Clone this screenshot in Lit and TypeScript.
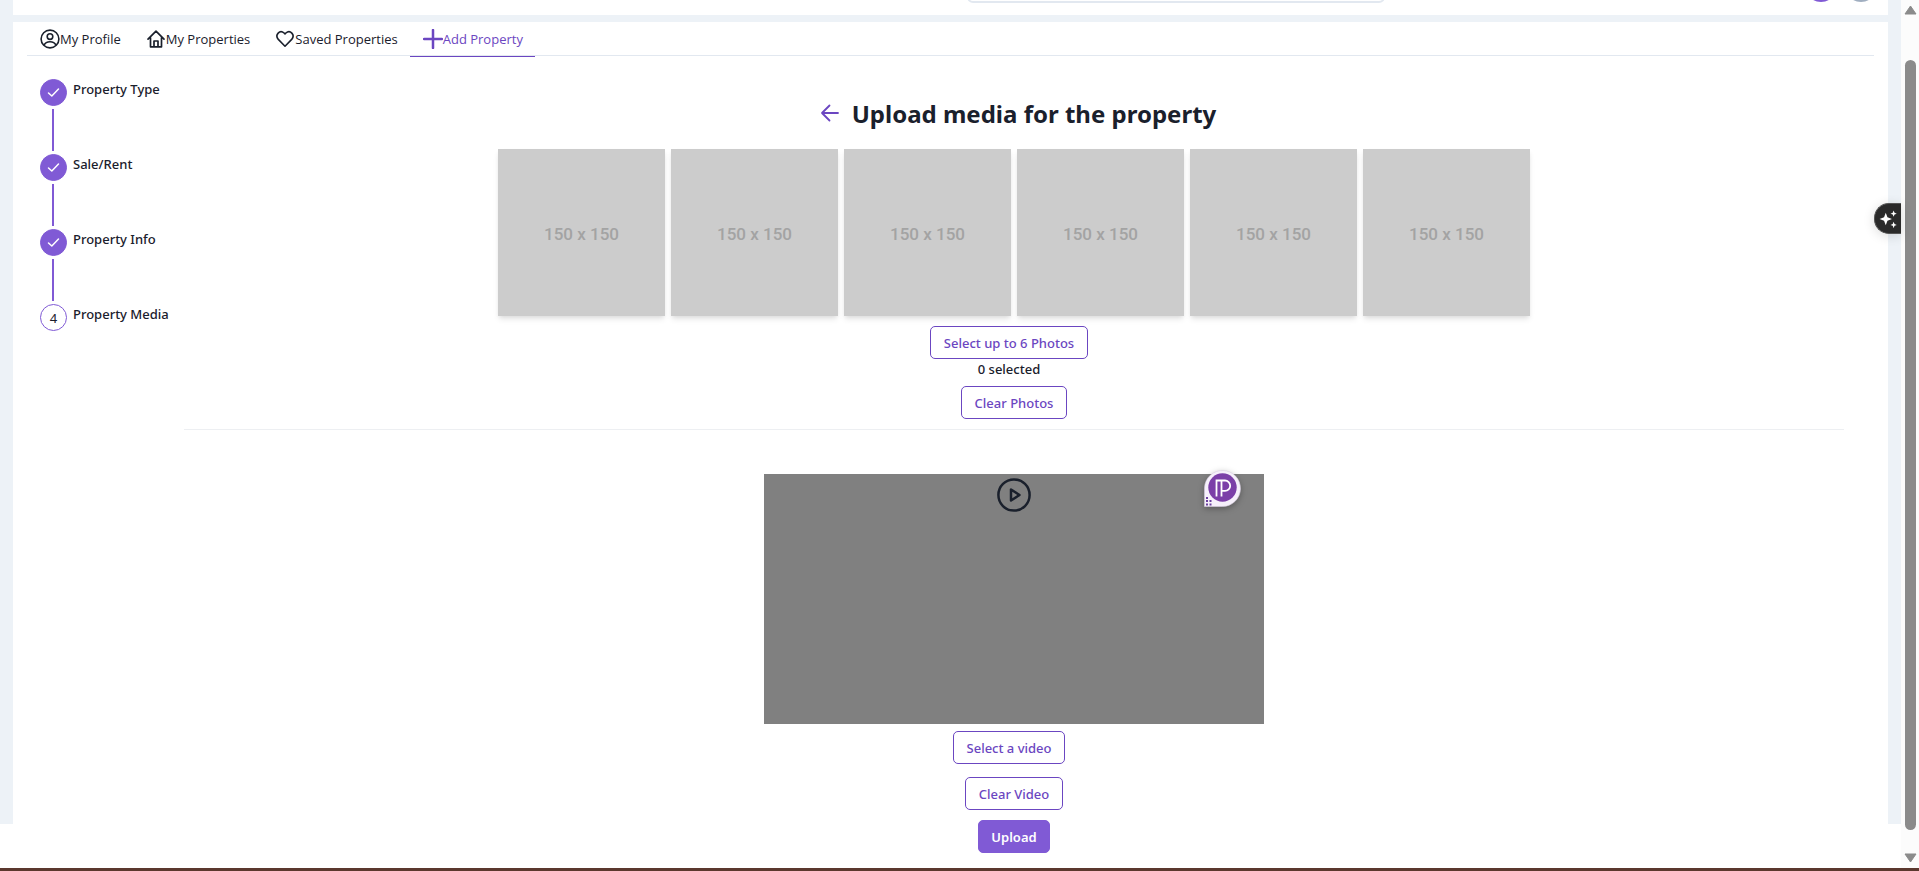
import { LitElement, html, css, svg } from "lit";
import { customElement, property } from "lit/decorators.js";

const icons: Record<string, unknown> = {
  profile: svg`<svg class="icon" viewBox="0 0 20 20" fill="none" stroke="currentColor" stroke-width="1.600"><circle cx="10" cy="10" r="8.900"/><circle cx="10" cy="7.600" r="2.800"/><path d="M4 16.200c1.200-2.600 3.400-3.400 6-3.400s4.800.8 6 3.400"/></svg>`,
  home: svg`<svg class="icon" viewBox="0 0 20 20" fill="none" stroke="currentColor" stroke-width="1.700" stroke-linejoin="round" stroke-linecap="round"><path d="M2 10.200L10 2.200l8 8M4.500 8.500v9.300h11V8.500M8 17.500v-5.500h4v5.500"/></svg>`,
  heart: svg`<svg class="icon" viewBox="0 0 20 20" fill="none" stroke="currentColor" stroke-width="1.600" stroke-linejoin="round"><path d="M10 17.200L3.300 10.400C-.5 6 4.800.2 9.100 4l.9.900.9-.9c4.300-3.800 9.600 2 5.800 6.400z"/></svg>`,
  plus: svg`<svg class="icon" viewBox="0 0 20 20" fill="none" stroke="currentColor" stroke-width="2.500" stroke-linecap="round"><path d="M10 1v18M1 10h18"/></svg>`,
};

@customElement("app-button")
export class AppButton extends LitElement {
  @property({ type: Boolean }) solid = false;

  static styles = css`
    :host { display: block; }
    .button {
      display: block;
      height: 33px;
      padding: 0 13px;
      border: 1px solid #6b46c1;
      border-radius: 5px;
      background: transparent;
      color: #6b46c1;
      font: 500 13px/18px "Noto Sans", "Open Sans", sans-serif;
      cursor: pointer;
    }
    .solid { padding: 0 12px; background: #805ad5; border-color: #805ad5; color: #fff; font-weight: 600; }
  `;

  render() {
    return html`<button type="button" class="button ${this.solid ? "solid" : ""}"><slot></slot></button>`;
  }
}

@customElement("app-root")
export class AppRoot extends LitElement {
  private tabs = [
    { icon: "profile", label: "My Profile" },
    { icon: "home", label: "My Properties" },
    { icon: "heart", label: "Saved Properties" },
    { icon: "plus", label: "Add Property", active: true },
  ];

  private steps = [
    { label: "Property Type", done: true },
    { label: "Sale/Rent", done: true },
    { label: "Property Info", done: true },
    { label: "Property Media", done: false },
  ];

  static styles = css`
    * { box-sizing: border-box; }
    :host {
      box-sizing: border-box;
      display: flex;
      height: 100vh;
      overflow: hidden;
      border-bottom: 3px solid #5b382e;
      background: #fff;
      color: #1a202c;
      font: 13px/20px "Noto Sans", "Open Sans", sans-serif;
    }
    .page { flex: 1; min-width: 0; position: relative; }
    .shell { height: calc(100% - 44px); padding: 0 13px; background: #edf2f7; }
    .topbar {
      display: flex;
      align-items: flex-end;
      justify-content: flex-end;
      height: 15px;
      overflow: hidden;
      padding: 0 11px 12px 0;
      background: #fff;
    }
    .search {
      width: 418px;
      height: 34px;
      margin-right: 420px;
      border: 2px solid #e2e8f0;
      border-radius: 6px;
      background: #fff;
    }
    .avatar { width: 32px; height: 32px; margin-bottom: 1px; border-radius: 50%; background: #a0aec0; }
    .bubble { margin-right: 8px; background: #805ad5; }
    .panel { margin-top: 7px; padding: 0 14px; background: #fff; }
    .tabs { display: flex; height: 34px; border-bottom: 1px solid #e2e8f0; }
    .tab {
      display: flex;
      align-items: center;
      height: 35px;
      padding: 0 12px 0 13px;
      border: 0;
      border-bottom: 1px solid transparent;
      background: none;
      color: inherit;
      font: 400 13px/20px "Open Sans", "Noto Sans", sans-serif;
      cursor: pointer;
    }
    .tab.active { color: #6b46c1; border-color: currentColor; }
    .icon { display: block; width: 20px; height: 20px; flex: none; }
    .body { display: flex; padding: 23px 30px 0 13px; }
    .steps { margin: 0; padding: 0; width: 144px; list-style: none; flex: none; }
    .step { display: grid; grid-template-columns: 27px 1fr; column-gap: 6px; font-weight: 500; }
    .dot {
      display: grid;
      place-items: center;
      width: 27px;
      height: 27px;
      border: 1px solid #805ad5;
      border-radius: 50%;
      font-weight: 400;
    }
    .dot.done { background: #805ad5; color: #fff; }
    .check { display: block; width: 13px; height: 13px; }
    .line { width: 2px; height: 42px; margin: 3px 12px; background: #805ad5; }
    .content { flex: 1; min-width: 0; display: flex; flex-direction: column; align-items: center; }
    .heading { display: flex; align-items: center; gap: 12px; margin: 17px 0; padding-left: 8px; }
    .title { margin: 0; font: 700 24px/36px "Noto Sans", "Open Sans", sans-serif; }
    .back { display: block; padding: 0; border: 0; background: none; color: #6b46c1; cursor: pointer; }
    .photos { display: grid; grid-template-columns: repeat(6, 1fr); gap: 6px; width: 100%; max-width: 1032px; }
    .photo {
      display: grid;
      place-items: center;
      aspect-ratio: 1;
      padding-top: 2px;
      background: #ccc;
      color: #a3a3a3;
      font: 500 17px/20px Roboto, sans-serif;
      box-shadow: 0 4px 6px -1px rgba(0, 0, 0, 0.1), 0 2px 4px -1px rgba(0, 0, 0, 0.06);
    }
    .picker { display: flex; flex-direction: column; align-items: center; margin-right: 10px; }
    .photo-picker { padding: 10px 0 7px; font-weight: 500; }
    .video-picker { padding: 7px 0 13px; }
    .rule { width: 100%; height: 1px; margin: 10px 0 44px; border: 0; background: #edeff2; }
    .video {
      position: relative;
      display: flex;
      justify-content: center;
      width: 500px;
      height: 250px;
      padding-top: 4px;
      background: #808080;
    }
    .play { display: block; width: 34px; height: 34px; }
    .badge { position: absolute; top: -5px; right: 23px; width: 37px; height: 38px; filter: drop-shadow(0 2px 3px rgba(0, 0, 0, 0.3)); }
    .upload { margin-top: 10px; }
    .assistant {
      position: absolute;
      top: 203px;
      right: 0;
      display: grid;
      place-items: center;
      width: 27px;
      height: 31px;
      padding: 0;
      border: 1px solid #555;
      border-right: 0;
      border-radius: 15px 0 0 15px;
      background: #2a2a2a;
      box-shadow: 0 2px 12px rgba(0, 0, 0, 0.14);
      cursor: pointer;
    }
    .scrollbar {
      display: flex;
      flex-direction: column;
      align-items: center;
      width: 18px;
      padding: 5px 0 5px;
      background: #fcfcfc;
      color: #8b8b8b;
    }
    .arrow { display: block; width: 13px; height: 10px; }
    .thumb { flex: 1; width: 11px; margin: 45px 0 23px; border-radius: 6px; background: #8b8b8b; }
  `;

  render() {
    return html`
      <div class="page">
        <div class="shell">
          <header class="topbar">
            <input class="search" type="search" aria-label="Search" />
            <span class="avatar bubble"></span>
            <span class="avatar"></span>
          </header>
          <main class="panel">
            <nav class="tabs" role="tablist">
              ${this.tabs.map(
                (t) => html`<button type="button" role="tab" class="tab ${t.active ? "active" : ""}">${icons[t.icon]}<span>${t.label}</span></button>`
              )}
            </nav>
            <div class="body">
              <ol class="steps">
                ${this.steps.map(
                  (s, i) => html`<li class="step">
                    <div>
                      <div class="dot ${s.done ? "done" : ""}">
                        ${s.done
                          ? html`<svg class="check" viewBox="0 0 13 13" fill="none" stroke="currentColor" stroke-width="1.500" stroke-linecap="round" stroke-linejoin="round"><path d="M1.500 7L4.800 10 11.500 3"/></svg>`
                          : i + 1}
                      </div>
                      ${s.done ? html`<div class="line"></div>` : ""}
                    </div>
                    <span>${s.label}</span>
                  </li>`
                )}
              </ol>
              <section class="content">
                <div class="heading">
                  <button type="button" class="back" aria-label="Back">
                    <svg class="icon" viewBox="0 0 20 20" fill="none" stroke="currentColor" stroke-width="1.800" stroke-linecap="round" stroke-linejoin="round"><path d="M18 9H2M9.500 1.500L2 9l7.500 7.500"/></svg>
                  </button>
                  <h1 class="title">Upload media for the property</h1>
                </div>
                <div class="photos">${[1, 2, 3, 4, 5, 6].map(() => html`<div class="photo">150 x 150</div>`)}</div>
                <div class="picker photo-picker">
                  <app-button>Select up to 6 Photos</app-button>
                  <span>0 selected</span>
                </div>
                <app-button>Clear Photos</app-button>
                <hr class="rule" />
                <div class="video">
                  <svg class="play" viewBox="0 0 34 34" fill="none" stroke="#1a202c" stroke-width="2.500" stroke-linejoin="round"><circle cx="17" cy="17" r="15.600"/><path d="M14 11.500v11l8.500-5.500z"/></svg>
                  <svg class="badge" viewBox="0 0 37 38">
                    <path d="M.5 37.500V18.500a18 18 0 1 1 18 19z" fill="#f6f0fb" stroke="#d8cfe0" stroke-width=".6"/>
                    <circle cx="18.500" cy="18.500" r="14.200" fill="#7b3fa8"/>
                    <path d="M12.500 27.500V11.500h8.500a5.200 5.200 0 0 1 0 10.400h-3.500v5.600M17.500 22V12" fill="none" stroke="#fff" stroke-width="1.800"/>
                    <path d="M2 28h2v2H2zM2 31h2v2H2zM2 34.500h2v2H2zM5.500 31h2v2h-2zM5.500 34.500h2v2h-2z" fill="#6b3fa0"/>
                  </svg>
                </div>
                <div class="picker video-picker"><app-button>Select a video</app-button></div>
                <app-button>Clear Video</app-button>
                <app-button class="upload" solid>Upload</app-button>
              </section>
            </div>
          </main>
        </div>
        <button type="button" class="assistant" aria-label="Assistant">
          <svg width="18" height="18" viewBox="0 0 16 16" fill="#fff"><path d="M6 2.500l1.500 4 4 1.500-4 1.500L6 13.500 4.500 9.500.5 8l4-1.500zM13 .5l.8 2 2 .8-2 .8-.8 2-.8-2-2-.8 2-.8zM13 10.500l.8 2 2 .8-2 .8-.8 2-.8-2-2-.8 2-.8z"/></svg>
        </button>
      </div>
      <div class="scrollbar" aria-hidden="true">
        <svg class="arrow" viewBox="0 0 13 10"><path d="M6.500 1L12 9H1z" fill="currentColor" stroke="currentColor" stroke-linejoin="round"/></svg>
        <div class="thumb"></div>
        <svg class="arrow" viewBox="0 0 13 10"><path d="M6.500 9L12 1H1z" fill="currentColor" stroke="currentColor" stroke-linejoin="round"/></svg>
      </div>
    `;
  }
}
